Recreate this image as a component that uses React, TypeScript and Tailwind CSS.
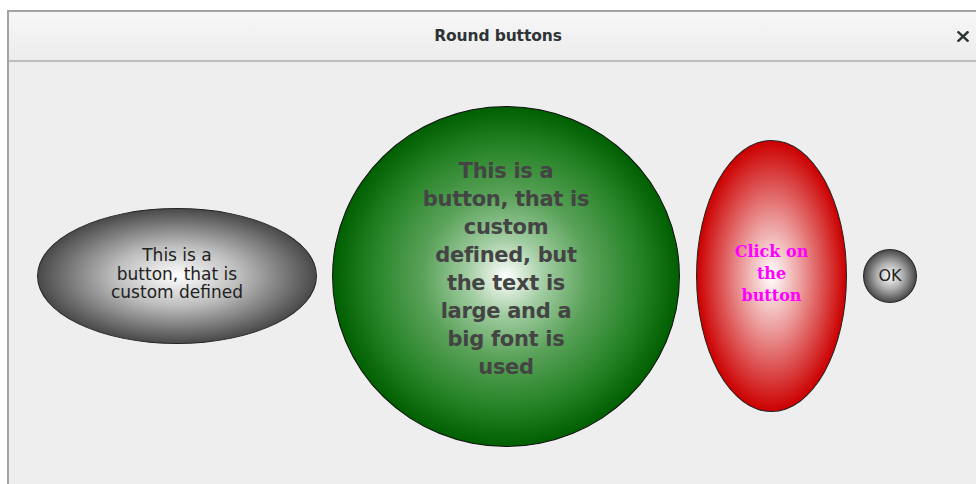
export default function App() {
  return (
    <div className="w-[976px] h-[484px] overflow-hidden bg-white pt-[10px] pl-[7px]">
      <div className="w-[980px] border-t-2 border-l-2 border-[#a3a3a3] bg-[#eeeeee]">
        <div className="relative h-[50px] flex items-center justify-center bg-[linear-gradient(#f7f7f7,#ececec)] border-b-2 border-[#bdbdbd]">
          <span className="pt-[2px] font-['DejaVu_Sans',sans-serif] font-bold text-[15.5px] tracking-[-0.1px] text-[#2e3436]">Round buttons</span>
          <svg className="absolute right-[18px] top-[19px]" width="12" height="11" viewBox="0 0 12 11">
            <path d="M1.5 1.3 L10.5 9.7 M10.5 1.3 L1.5 9.7" stroke="#2e3436" strokeWidth="2.5" strokeLinecap="square" />
          </svg>
        </div>
        <div className="h-[428px] flex items-center pl-[28px]">
          <button className="w-[280px] h-[136px] rounded-[50%] border border-[#222] bg-[radial-gradient(closest-side,#ffffff,#bdbdbd_45%,#4a4a4a)] flex flex-col items-center justify-center pb-[4px] font-['DejaVu_Sans',sans-serif] text-[17px] leading-[18.5px] text-[#222]">
            <span>This is a</span>
            <span>button, that is</span>
            <span>custom defined</span>
          </button>
          <button className="ml-[15px] w-[348px] h-[341px] rounded-[50%] border border-[#111] bg-[radial-gradient(closest-side,#ffffff,#a3cda3_22%,#5aa25a_48%,#2a862a_75%,#005f00)] flex flex-col items-center justify-center pb-[14px] font-['DejaVu_Sans',sans-serif] font-bold text-[21px] tracking-[-0.3px] leading-[28px] text-[#444]">
            <span>This is a</span>
            <span>button, that is</span>
            <span>custom</span>
            <span>defined, but</span>
            <span>the text is</span>
            <span>large and a</span>
            <span>big font is</span>
            <span>used</span>
          </button>
          <button className="ml-[16px] w-[151px] h-[272px] rounded-[50%] border border-[#222] bg-[radial-gradient(closest-side,#ffffff,#ec9c9c_40%,#cc0000)] flex flex-col items-center justify-center pb-[4px] font-['DejaVu_Serif',serif] font-bold text-[16px] leading-[22px] text-[#ff00ff]">
            <span>Click on</span>
            <span>the</span>
            <span>button</span>
          </button>
          <button className="ml-[16px] w-[54px] h-[54px] rounded-full border border-[#222] bg-[radial-gradient(closest-side,#ffffff,#b0b0b0_50%,#4a4a4a)] flex items-center justify-center font-['DejaVu_Sans',sans-serif] text-[16px] text-[#222]">
            OK
          </button>
        </div>
      </div>
    </div>
  )
}
